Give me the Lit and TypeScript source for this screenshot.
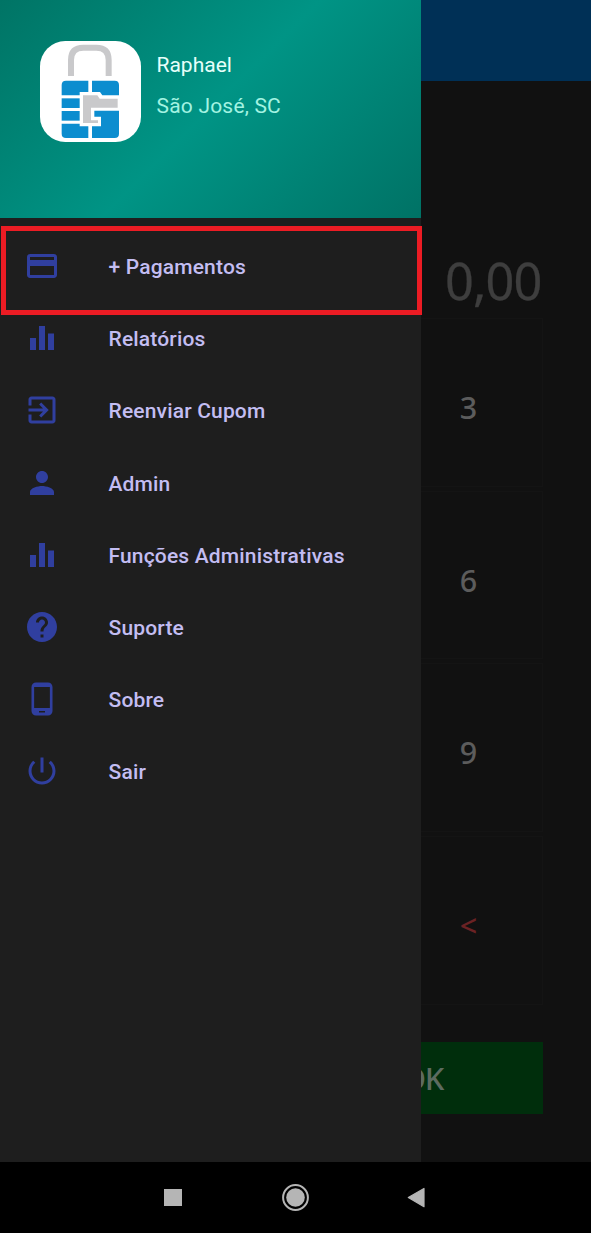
import { LitElement, html, css, svg } from "lit";
import { customElement } from "lit/decorators.js";

const ICONS = {
  card: svg`<path d="M20 4H4c-1.11 0-1.99.89-1.99 2L2 18c0 1.11.89 2 2 2h16c1.11 0 2-.89 2-2V6c0-1.11-.89-2-2-2zm0 14H4v-6h16v6zm0-10H4V6h16v2z"/>`,
  bars: svg`<path d="M4 20h4v-8H4v8zm6 0h4V4h-4v16zm6-11v11h4V9h-4z"/>`,
  enter: svg`<path d="M10.09 15.59L11.5 17l5-5-5-5-1.41 1.41L12.67 11H3v2h9.67l-2.58 2.59zM19 3H5c-1.11 0-2 .9-2 2v4h2V5h14v14H5v-4H3v4c0 1.1.89 2 2 2h14c1.1 0 2-.9 2-2V5c0-1.1-.9-2-2-2z"/>`,
  person: svg`<path d="M12 12c2.21 0 4-1.79 4-4s-1.79-4-4-4-4 1.79-4 4 1.79 4 4 4zm0 2c-2.67 0-8 1.34-8 4v2h16v-2c0-2.66-5.33-4-8-4z"/>`,
  help: svg`<path d="M12 2C6.48 2 2 6.48 2 12s4.48 10 10 10 10-4.48 10-10S17.52 2 12 2zm1 17h-2v-2h2v2zm2.07-7.75l-.9.92C13.45 12.9 13 13.5 13 15h-2v-.5c0-1.1.45-2.1 1.17-2.83l1.24-1.26c.37-.36.59-.86.59-1.41 0-1.1-.9-2-2-2s-2 .9-2 2H8c0-2.21 1.79-4 4-4s4 1.79 4 4c0 .88-.36 1.68-.93 2.25z"/>`,
  phone: svg`<path d="M16 1H8C6.34 1 5 2.34 5 4v16c0 1.66 1.34 3 3 3h8c1.66 0 3-1.34 3-3V4c0-1.66-1.34-3-3-3zm-2 20h-4v-1h4v1zm3.25-3H6.75V4h10.5v14z"/>`,
  power: svg`<path d="M13 3h-2v10h2V3zm4.83 2.17l-1.42 1.42C17.99 7.86 19 9.81 19 12c0 3.87-3.13 7-7 7s-7-3.13-7-7c0-2.19 1.01-4.14 2.58-5.42L6.17 5.17C4.23 6.82 3 9.26 3 12c0 4.97 4.03 9 9 9s9-4.03 9-9c0-2.74-1.23-5.18-3.17-6.83z"/>`,
};

const MENU = [
  { icon: ICONS.card, label: "+ Pagamentos" },
  { icon: ICONS.bars, label: "Relatórios" },
  { icon: ICONS.enter, label: "Reenviar Cupom" },
  { icon: ICONS.person, label: "Admin" },
  { icon: ICONS.bars, label: "Funções Administrativas" },
  { icon: ICONS.help, label: "Suporte" },
  { icon: ICONS.phone, label: "Sobre" },
  { icon: ICONS.power, label: "Sair" },
];

@customElement("nav-drawer")
class NavDrawer extends LitElement {
  static styles = css`
    :host { display: flex; flex-direction: column; background: #1e1e1e; font-family: Roboto, sans-serif; }
    .head {
      box-sizing: border-box; height: 218px; padding: 41px 0 0 40px; display: flex; gap: 15.5px;
      background: linear-gradient(135deg, #007465 0%, #009485 50%, #007265 100%);
    }
    .logo { width: 101px; height: 101px; display: block; }
    .who { padding-top: 10px; font-size: 21px; line-height: 28px; }
    .name { color: #e6fffa; }
    .place { color: #a3f3e2; margin-top: 13px; letter-spacing: 0.2px; }
    .menu { padding-top: 12.9px; }
    .item { display: flex; align-items: center; height: 72.2px; padding-left: 24px; gap: 48.5px; }
    .icon { width: 36px; height: 36px; fill: #303f9f; margin-bottom: 2px; }
    .label { color: #c3bdf2; font-weight: 500; font-size: 21px; letter-spacing: 0.17px; line-height: 28px; white-space: nowrap; }
    .mark {
      position: absolute; left: 1px; top: 226px; width: 421px; height: 89px;
      box-sizing: border-box; border: 5px solid #ec1c24;
    }
  `;
  render() {
    return html`
      <div class="head">
        <svg class="logo" viewBox="30 33 303 303">
          <rect fill="#fff" x="30" y="33" width="303" height="303" rx="76"/>
          <path fill="none" stroke="#c9c9cb" stroke-width="18" d="M123 138V90Q123 53 160 53H199Q236 53 236 90V138"/>
          <g fill="#0c8dcf">
            <path d="M108 152H175V186H149V196H95V165Q95 152 108 152z"/>
            <path d="M186 152H254Q267 152 267 165V196H217L210 186H186z"/>
            <path d="M95 205H149V234H95z"/>
            <path d="M95 243H149V272H95z"/>
            <path d="M95 281H149V289H175V324H108Q95 324 95 311z"/>
            <path d="M193 242H267V311Q267 324 254 324H186V289H213V260H193z"/>
          </g>
          <path fill="#c9c9cb" d="M159 196H202L209 206H263V233H183V271H204V279H159z"/>
        </svg>
        <div class="who">
          <div class="name">Raphael</div>
          <div class="place">São José, SC</div>
        </div>
      </div>
      <div class="menu">
        ${MENU.map((m) => html`
          <div class="item">
            <svg class="icon" viewBox="0 0 24 24">${m.icon}</svg>
            <span class="label">${m.label}</span>
          </div>`)}
      </div>
      <div class="mark"></div>
    `;
  }
}

@customElement("app-root")
class AppRoot extends LitElement {
  static styles = css`
    :host {
      display: flex; flex-direction: column; position: relative; height: 1233px; overflow: hidden;
      background: #111; font-family: "Noto Sans", sans-serif; color: #5c5c5c;
    }
    .bar { height: 81px; flex: none; background: #003056; }
    .screen { flex: 1; padding: 0 48px; display: flex; flex-direction: column; }
    .amount { padding: 165px 1.5px 0 0; text-align: right; font-size: 50.5px; letter-spacing: -0.9px; line-height: 70px; color: #3e3e3e; -webkit-text-stroke: 0.3px currentColor; }
    .pad { display: grid; grid-template-columns: repeat(3, 149px); column-gap: 24px; row-gap: 4px; padding-top: 2px; }
    .key {
      box-sizing: border-box; height: 168.7px; border: 1px solid #141414; padding-top: 9px;
      display: flex; align-items: center; justify-content: center; font-size: 30.5px; font-weight: 500;
    }
    .del { color: #6b2224; }
    .ok {
      box-sizing: border-box; align-self: flex-end; margin-top: 37px; padding-right: 3px; width: 238px; height: 72px; background: #002e0c;
      display: flex; align-items: center; justify-content: center; font-size: 31px; font-weight: 500;
      letter-spacing: -1.2px; color: #5d6b60;
    }
    .drawer { position: absolute; left: 0; top: 0; width: 421px; height: 1162px; }
    .nav { height: 71px; flex: none; background: #000; display: flex; align-items: center; justify-content: center; }
    .nav svg { width: 591px; height: 71px; display: block; }
  `;
  render() {
    const keys = ["", "", "3", "", "", "6", "", "", "9", "", "", "<"];
    return html`
      <div class="bar"></div>
      <div class="screen">
        <div class="amount">0,00</div>
        <div class="pad">
          ${keys.map((k) => html`<div class="key ${k === "<" ? "del" : ""}">${k}</div>`)}
        </div>
        <div class="ok">OK</div>
      </div>
      <nav-drawer class="drawer"></nav-drawer>
      <div class="nav">
        <svg viewBox="0 0 591 71">
          <rect x="164" y="27" width="18" height="17" fill="#b5b5b5"/>
          <circle cx="295.500" cy="35.500" r="12.400" fill="none" stroke="#b5b5b5" stroke-width="2"/>
          <circle cx="295.500" cy="35.500" r="9.300" fill="#b5b5b5"/>
          <path d="M408.300 35.500L424 26.500V44.700z" fill="#b5b5b5" stroke="#b5b5b5" stroke-width="1.200" stroke-linejoin="round"/>
        </svg>
      </div>
    `;
  }
}
